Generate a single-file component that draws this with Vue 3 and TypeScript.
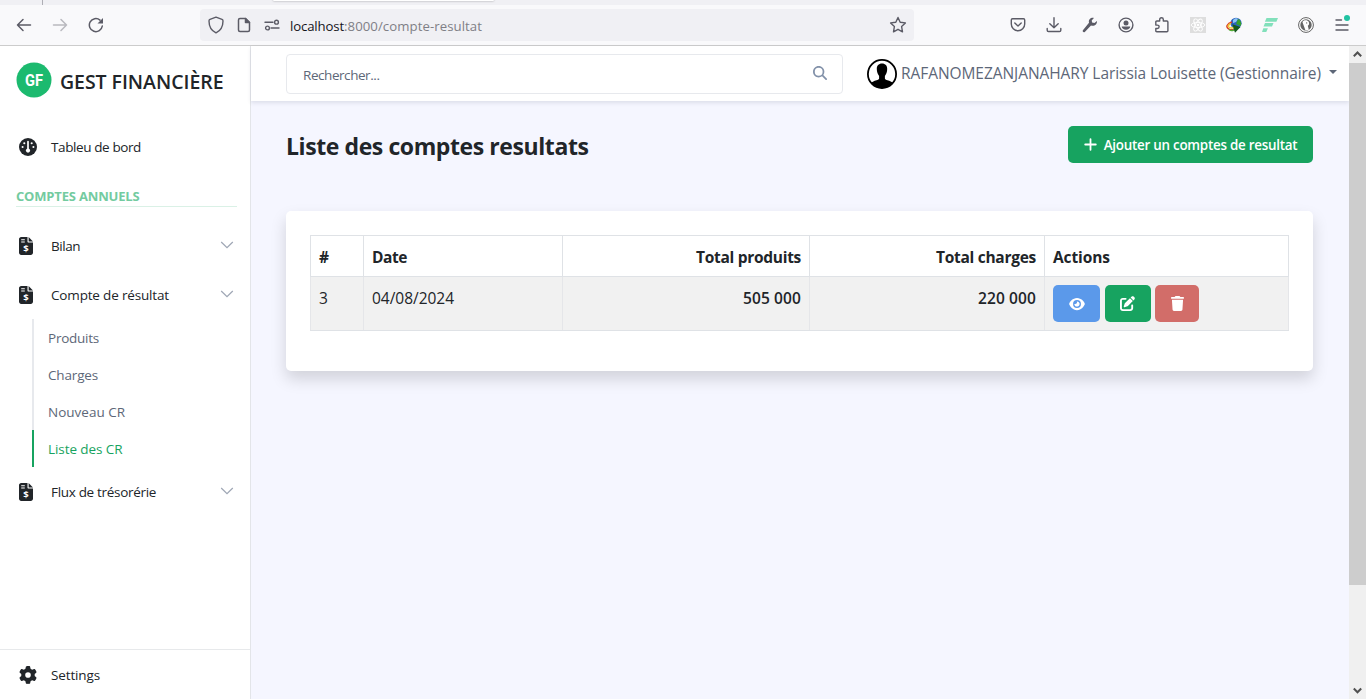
<script setup lang="ts">
import type { Directive } from 'vue'

interface Column { label: string; width: number; textWidth: number; end?: boolean }

const columns: Column[] = [
  { label: '#', width: 53, textWidth: 9 },
  { label: 'Date', width: 199, textWidth: 35 },
  { label: 'Total produits', width: 247, textWidth: 105, end: true },
  { label: 'Total charges', width: 235, textWidth: 100, end: true },
  { label: 'Actions', width: 244, textWidth: 57 },
]

const groups = [
  { label: 'Bilan', width: 29 },
  { label: 'Compte de résultat', width: 118, open: true },
  { label: 'Flux de trésorérie', width: 105 },
]

const subItems = [
  { label: 'Produits', width: 51 },
  { label: 'Charges', width: 50 },
  { label: 'Nouveau CR', width: 77 },
  { label: 'Liste des CR', width: 74.5, active: true },
]

// Tracks a label so that it fills the given width in pixels.
const vFit: Directive<HTMLElement, number> = {
  mounted(el, { value }) {
    const count = (el.textContent ?? '').length
    const natural = el.getBoundingClientRect().width
    if (count > 0 && natural > 0) el.style.letterSpacing = `${(value - natural) / count}px`
  },
}
</script>

<template>
  <div class="window">
    <div class="tabs"><span class="tab-sep"></span><span class="tab-active"></span></div>
    <div class="toolbar">
      <div class="nav-buttons">
        <span class="cell"><svg width="16" height="16" viewBox="0 0 16 16" class="ln w15"><path d="M14.500 8H1.500M7 2.500 1.500 8 7 13.500" /></svg></span>
        <span class="cell faded"><svg width="16" height="16" viewBox="0 0 16 16" class="ln w15"><path d="M1.500 8h13M9 2.500 14.500 8 9 13.500" /></svg></span>
        <span class="cell"><svg width="16" height="16" viewBox="0 0 16 16" class="ln w15"><path d="M14.300 9A6.500 6.500 0 1 1 12 3.100" /><path d="M15 1v5.500H9.500z" fill="#5b5b66" stroke="none" /></svg></span>
      </div>
      <div class="urlbar">
        <svg width="16" height="18" viewBox="0 0 16 18" class="ln w14 shield"><path d="M8 1.200 14 3.400c.7.300 1 .8 1 1.500 0 5.200-2 9.500-7 12-5-2.500-7-6.800-7-12 0-.7.300-1.200 1-1.500z" /></svg>
        <svg width="14" height="16" viewBox="0 0 14 16" class="ln w15 page"><path d="M3 1.500h5.500L12.500 5.500V13c0 .9-.6 1.500-1.500 1.500H3c-.9 0-1.500-.6-1.500-1.500V3c0-.9.600-1.500 1.500-1.500z" /><path d="M8.500 1.500v4h4z" fill="#5b5b66" /></svg>
        <svg width="16" height="12" viewBox="0 0 16 12" class="ln w14 perms"><path d="M1 3.300h8M7 9h8" /><circle cx="12.500" cy="3.200" r="1.900" /><circle cx="3.500" cy="9" r="1.900" /></svg>
        <span class="url"><span v-fit="54" class="fit host">localhost</span><span v-fit="138" class="fit">:8000/compte-resultat</span></span>
        <svg width="18" height="18" viewBox="0 0 18 18" class="ln w14 star"><path d="m9 1.500 2.200 4.700 5.200.7-3.800 3.600.9 5.300L9 13.300l-4.500 2.500.9-5.300L1.600 6.900l5.200-.7z" /></svg>
      </div>
      <div class="ext">
        <span class="cell"><svg width="16" height="16" viewBox="0 0 16 16" class="ln w14"><path d="M2.500 1.700h11c.7 0 1.200.5 1.200 1.200v4.200a6.700 6.700 0 0 1-13.400 0V2.900c0-.7.500-1.200 1.200-1.200z" /><path d="m4.800 6 3.200 3 3.200-3" /></svg></span>
        <span class="cell"><svg width="16" height="16" viewBox="0 0 16 16" class="ln w14"><path d="M8 .7v10M3.800 6.700 8 10.800l4.200-4.100M1.200 11.500v1.700c0 .8.500 1.300 1.300 1.300h11c.8 0 1.300-.5 1.300-1.300v-1.700" /></svg></span>
        <span class="cell"><svg width="16" height="16" viewBox="0 0 16 16"><path fill="#5b5b66" d="M15 3.900 12.400 6 10.100 5.500 9.700 3.400 11.900.9C8.900.3 6.200 2.500 7 5.700L.9 13.300c-.9 1.200.8 2.700 1.900 1.700L9 8.400c3.300 1.200 6.300-1.300 6-4.500z" /></svg></span>
        <span class="cell"><svg width="16" height="16" viewBox="0 0 16 16"><circle cx="8" cy="8" r="6.900" fill="none" stroke="#5b5b66" stroke-width="1.400" /><circle cx="8" cy="5.900" r="2.500" fill="#5b5b66" /><path fill="#5b5b66" d="M3.700 9.500h8.600c0 1.900-2 3.200-4.300 3.200s-4.300-1.300-4.300-3.200z" /></svg></span>
        <span class="cell"><svg width="16" height="16" viewBox="0 0 16 16" class="ln w14"><path d="M1.800 6.300V5c0-.6.400-1 1-1h2.900V2.500a1.800 1.800 0 0 1 3.600 0V4h3.600c.6 0 1 .4 1 1v8.800c0 .6-.4 1-1 1H2.800c-.6 0-1-.4-1-1v-2.300h1.600a1.700 1.700 0 0 0 0-3.400H1.800z" /></svg></span>
        <span class="cell"><svg width="16" height="16" viewBox="0 0 16 16"><path fill="#dedede" d="M0 0h16v16H0z" /><g fill="none" stroke="#fff" stroke-width=".9"><ellipse cx="8" cy="8" rx="6.800" ry="2.600" /><ellipse cx="8" cy="8" rx="6.800" ry="2.600" transform="rotate(60 8 8)" /><ellipse cx="8" cy="8" rx="6.800" ry="2.600" transform="rotate(120 8 8)" /></g><circle cx="8" cy="8" r="1.300" fill="#fff" /></svg></span>
        <span class="cell"><svg width="16" height="16" viewBox="0 0 16 16"><circle cx="10" cy="6.300" r="5.600" fill="#2b62bd" /><path fill="#8fc4f4" d="M7 3c2-2 4-2 5-1l-2 3-3 1z" /><path fill="#35a02c" d="M12 2c3 1 4 5 2.500 7L10 7z" /><path d="M6 5C1 6.500-.5 10 2.500 11.800S9 13 10 10" fill="none" stroke="#d83b23" stroke-width="1.500" /><path d="M5 6.600c-3 1.200-3.500 3-1.800 3.800s4 .8 5.300-.8" fill="none" stroke="#f1c832" stroke-width="1.600" /><path d="M3 12.500c2 1.600 5 1.500 7-1" fill="none" stroke="#52ac35" stroke-width="1.400" /><path fill="#145a1c" d="M6.300 7.200 14.500 10 9 15.700z" /></svg></span>
        <span class="cell"><svg width="16" height="16" viewBox="0 0 16 16" fill="#82e0bb"><path d="M4.500 1H16l-1.600 3.700H2.900zM3 6.100h8.500L10 9.600H1.500zM1.300 11.300h4.600L4.300 15H0z" /></svg></span>
        <span class="cell"><svg width="16" height="16" viewBox="0 0 16 16"><circle cx="8" cy="8" r="7.400" fill="#fff" stroke="#626262" /><circle cx="8" cy="8" r="5.700" fill="#666" /><path fill="#fff" d="M4.500 5.200C5 2.800 9.800 2.600 10.800 5c.6 1.600.4 3-1 3.800l1 4-3.300.6z" /><circle cx="8.700" cy="5.900" r=".6" fill="#555" /></svg></span>
        <span class="cell menu"><svg width="16" height="16" viewBox="0 0 16 16" class="ln w14"><path d="M2 3h5.500M2 8h12M2 13h12" /></svg><span class="dot"></span></span>
      </div>
    </div>

    <div class="page-body">
      <aside class="sidebar">
        <div class="brand">
          <svg class="logo" width="36" height="36" viewBox="0 0 36 36"><circle cx="18" cy="18" r="17.500" fill="#1cba6f" /><text x="18" y="23.700" text-anchor="middle" textLength="18" lengthAdjust="spacingAndGlyphs">GF</text></svg>
          <span v-fit="163.500" class="fit brand-name">GEST FINANCIÈRE</span>
        </div>

        <nav class="nav">
          <a class="item">
            <span class="icon"><svg width="18" height="18" viewBox="0 0 18 18"><circle cx="9" cy="9" r="9" fill="#212529" /><path d="M9 3.700v7.800" stroke="#fff" stroke-width="1.700" stroke-linecap="round" /><circle cx="9" cy="12.600" r="2.100" fill="#fff" /><g fill="#fff"><circle cx="5.300" cy="5.200" r="1.050" /><circle cx="12.700" cy="5.200" r="1.050" /><circle cx="3.600" cy="9" r="1.050" /><circle cx="14.400" cy="9" r="1.050" /></g></svg></span>
            <span v-fit="90" class="fit">Tableu de bord</span>
          </a>
          <div class="section"><span v-fit="123.500" class="fit">COMPTES ANNUELS</span></div>
          <template v-for="group in groups" :key="group.label">
            <a class="item">
              <span class="icon"><svg width="14" height="18" viewBox="0 0 14 18"><path fill="#212529" d="M2.200 0h6.300v4.600c0 .6.400 1 1 1h4.500v10.200c0 1.200-1 2.200-2.200 2.200H2.200C1 18 0 17 0 15.800V2.200C0 1 1 0 2.200 0z" /><path fill="#212529" d="M9.600 0 14 4.500H9.600z" /><path d="M2.200 2.700h3.600M2.200 5h3.600" stroke="#fff" stroke-width="1.050" /><text class="dollar" x="7" y="15.300" text-anchor="middle">$</text></svg></span>
              <span v-fit="group.width" class="fit">{{ group.label }}</span>
              <svg class="chevron" width="14" height="8" viewBox="0 0 14 8"><path d="m1.200 1 5.800 5.700L12.800 1" fill="none" stroke="#9fa7b5" stroke-width="1.250" /></svg>
            </a>
            <ul v-if="group.open" class="sub">
              <li v-for="s in subItems" :key="s.label" :class="{ active: s.active }"><span v-fit="s.width" class="fit">{{ s.label }}</span></li>
            </ul>
          </template>
        </nav>

        <a class="item settings">
          <span class="icon"><svg width="18" height="18" viewBox="0 0 512 512"><path fill="#212529" d="M495.900 166.600c3.200 8.700 .5 18.400-6.400 24.600l-43.300 39.400c1.100 8.300 1.700 16.800 1.700 25.400s-.6 17.100-1.700 25.400l43.300 39.400c6.900 6.200 9.600 15.900 6.400 24.600c-4.400 11.900-9.700 23.300-15.800 34.300l-4.700 8.100c-6.600 11-14 21.400-22.100 31.200c-5.900 7.200-15.700 9.600-24.500 6.800l-55.700-17.700c-13.400 10.300-28.200 18.900-44 25.400l-12.500 57.100c-2 9.100-9 16.300-18.200 17.800c-13.800 2.300-28 3.500-42.500 3.500s-28.700-1.200-42.500-3.500c-9.200-1.500-16.200-8.700-18.200-17.800l-12.500-57.100c-15.800-6.500-30.600-15.100-44-25.400L83.100 425.900c-8.800 2.800-18.600 .3-24.500-6.800c-8.100-9.800-15.500-20.200-22.100-31.200l-4.700-8.100c-6.100-11-11.400-22.400-15.800-34.300c-3.200-8.700-.5-18.400 6.400-24.600l43.300-39.400C64.600 273.100 64 264.600 64 256s.6-17.100 1.700-25.400L22.400 191.200c-6.900-6.200-9.600-15.900-6.400-24.600c4.400-11.900 9.700-23.300 15.800-34.300l4.700-8.100c6.600-11 14-21.400 22.100-31.200c5.900-7.200 15.700-9.600 24.500-6.800l55.700 17.700c13.400-10.300 28.200-18.900 44-25.400l12.500-57.100c2-9.100 9-16.300 18.200-17.800C227.300 1.200 241.500 0 256 0s28.700 1.200 42.500 3.500c9.200 1.500 16.200 8.700 18.200 17.800l12.500 57.100c15.800 6.500 30.600 15.100 44 25.400l55.700-17.700c8.800-2.800 18.600-.3 24.500 6.800c8.100 9.800 15.500 20.200 22.100 31.200l4.700 8.100c6.100 11 11.400 22.400 15.800 34.300zM256 336a80 80 0 1 0 0-160 80 80 0 1 0 0 160z" /></svg></span>
          <span v-fit="49" class="fit">Settings</span>
        </a>
      </aside>

      <div class="main">
        <header class="topbar">
          <div class="search">
            <span v-fit="76.500" class="fit">Rechercher...</span>
            <svg width="14" height="14" viewBox="0 0 512 512"><path fill="#8291a9" d="M416 208c0 45.900-14.900 88.300-40 122.700L502.600 457.400c12.500 12.500 12.500 32.800 0 45.300s-32.800 12.500-45.300 0L330.700 376c-34.400 25.200-76.800 40-122.700 40C93.100 416 0 322.900 0 208S93.100 0 208 0S416 93.100 416 208zM208 352a144 144 0 1 0 0-288 144 144 0 1 0 0 288z" /></svg>
          </div>
          <div class="user">
            <svg width="30" height="30" viewBox="0 0 30 30"><circle cx="15" cy="15" r="14.100" fill="#fff" stroke="#000" stroke-width="1.800" /><path d="M15 4.600c3.400 0 5.300 2.300 5.200 5.500 0 2.800-1 5.300-2.300 6.800v2.700c0 1.300 2.800 1.700 5.300 2.700 1.300.5 2 1 2.500 1.700A14.200 14.200 0 0 1 15 29.200 14.200 14.200 0 0 1 4.300 24c.5-.7 1.200-1.200 2.500-1.700 2.500-1 5.300-1.400 5.300-2.700v-2.700c-1.300-1.500-2.300-4-2.300-6.800-.1-3.200 1.800-5.500 5.200-5.500z" /></svg>
            <span v-fit="420" class="fit user-name">RAFANOMEZANJANAHARY Larissia Louisette (Gestionnaire)</span>
            <span class="caret"></span>
          </div>
        </header>

        <section class="content">
          <div class="title-row">
            <h1><span v-fit="302.500" class="fit">Liste des comptes resultats</span></h1>
            <button class="btn add"><svg width="13" height="13" viewBox="0 0 13 13"><path d="M6.500 1.200v10.600M1.200 6.500h10.600" stroke="#fff" stroke-width="1.800" stroke-linecap="round" /></svg><span v-fit="193.500" class="fit">Ajouter un comptes de resultat</span></button>
          </div>
          <div class="card">
            <table>
              <colgroup><col v-for="c in columns" :key="c.label" :style="{ width: c.width + 'px' }" /></colgroup>
              <thead>
                <tr><th v-for="c in columns" :key="c.label" :class="{ end: c.end }"><span v-fit="c.textWidth" class="fit">{{ c.label }}</span></th></tr>
              </thead>
              <tbody>
                <tr>
                  <td><span v-fit="9" class="fit">3</span></td>
                  <td><span v-fit="82" class="fit">04/08/2024</span></td>
                  <td class="end num"><span v-fit="58" class="fit">505 000</span></td>
                  <td class="end num"><span v-fit="58" class="fit">220 000</span></td>
                  <td class="tools">
                    <div class="actions">
                      <button class="btn view"><svg width="16" height="14" viewBox="0 0 576 512"><path fill="#fff" d="M288 32c-80.800 0-145.500 36.800-192.600 80.600C48.600 156 17.300 208 2.500 243.700c-3.300 7.900-3.300 16.700 0 24.600C17.300 304 48.600 356 95.400 399.400C142.500 443.200 207.200 480 288 480s145.500-36.800 192.600-80.600c46.800-43.500 78.100-95.400 93-131.100c3.300-7.900 3.300-16.700 0-24.600c-14.900-35.700-46.200-87.700-93-131.100C433.500 68.800 368.800 32 288 32zM144 256a144 144 0 1 1 288 0 144 144 0 1 1 -288 0zm144-64c0 35.300-28.700 64-64 64c-7.100 0-13.900-1.200-20.300-3.300c-5.500-1.800-11.900 1.600-11.700 7.400c.3 6.900 1.300 13.800 3.200 20.700c13.700 51.200 66.400 81.600 117.600 67.900s81.600-66.400 67.900-117.600c-11.100-41.500-47.800-69.400-88.600-71.100c-5.800-.2-9.200 6.100-7.400 11.700c2.100 6.400 3.300 13.200 3.300 20.300z" /></svg></button>
                      <button class="btn edit"><svg width="15" height="15" viewBox="0 0 512 512"><path fill="#fff" d="M471.600 21.700c-21.900-21.900-57.300-21.900-79.200 0L362.300 51.700l97.900 97.900 30.100-30.100c21.900-21.900 21.900-57.300 0-79.200L471.600 21.700zm-299.200 220c-6.100 6.100-10.800 13.600-13.500 21.900l-29.600 88.800c-2.900 8.600-.6 18.100 5.800 24.600s15.900 8.700 24.600 5.800l88.800-29.600c8.200-2.700 15.700-7.400 21.900-13.500L437.700 172.300 339.700 74.300 172.400 241.700zM96 64C43 64 0 107 0 160V416c0 53 43 96 96 96H352c53 0 96-43 96-96V320c0-17.700-14.300-32-32-32s-32 14.300-32 32v96c0 17.700-14.300 32-32 32H96c-17.700 0-32-14.300-32-32V160c0-17.700 14.300-32 32-32h96c17.700 0 32-14.300 32-32s-14.300-32-32-32H96z" /></svg></button>
                      <button class="btn remove"><svg width="13" height="15" viewBox="0 0 448 512"><path fill="#fff" d="M135.200 17.700L128 32H32C14.300 32 0 46.300 0 64S14.300 96 32 96H416c17.700 0 32-14.300 32-32s-14.300-32-32-32H320l-7.200-14.300C307.400 6.800 296.300 0 284.200 0H163.800c-12.100 0-23.200 6.800-28.600 17.700zM416 128H32L53.200 467c1.600 25.300 22.600 45 47.900 45H346.900c25.300 0 46.300-19.700 47.900-45L416 128z" /></svg></button>
                    </div>
                  </td>
                </tr>
              </tbody>
            </table>
          </div>
        </section>
      </div>

      <div class="scrollbar">
        <svg width="17" height="17" viewBox="0 0 17 17"><path d="m4.800 10.300 3.700-3.800 3.700 3.800" /></svg>
        <span class="thumb"></span>
        <svg width="17" height="17" viewBox="0 0 17 17"><path d="m4.800 6.500 3.700 3.800 3.700-3.800" /></svg>
      </div>
    </div>
  </div>
</template>

<style>
html, body { margin: 0; overflow: hidden; }
</style>

<style scoped>
* { box-sizing: border-box; }
.window { width: 1366px; height: 699px; display: flex; flex-direction: column; overflow: hidden; font-family: "Open Sans", "Noto Sans", sans-serif; font-size: 13.500px; color: #212529; background: #f5f6ff; }
.fit { display: inline-block; white-space: pre; vertical-align: top; }

.tabs { height: 5px; flex: none; background: #f0f0f4; display: flex; }
.tab-sep { width: 1px; margin-left: 42px; background: #aeaeb5; }
.tab-active { width: 221px; height: 1px; margin-left: 230px; background: #fff; border-radius: 0 0 4px 4px; box-shadow: 0 0 2px rgba(0, 0, 0, .5); }
.toolbar { height: 41px; flex: none; display: flex; background: #f9f9fb; border-bottom: 1px solid #ccc; }
.nav-buttons { display: flex; width: 200px; padding-left: 6px; }
.cell { width: 36px; height: 40px; display: flex; align-items: center; justify-content: center; }
.faded { opacity: .4; }
.ln { fill: none; stroke: #5b5b66; stroke-linecap: round; stroke-linejoin: round; }
.w14 { stroke-width: 1.400; }
.w15 { stroke-width: 1.500; }
.urlbar { width: 714px; height: 32px; margin-top: 4px; padding: 0 7px 0 8px; display: flex; align-items: center; background: #f0f0f4; border-radius: 4px; }
.page { margin-left: 13px; }
.perms { margin-left: 13px; }
.url { margin-left: 10px; padding-top: 1px; color: #7f7f86; font-size: 13.200px; }
.host { color: #15141a; }
.star { margin-left: auto; }
.ext { display: flex; margin-left: 86px; }
.menu { position: relative; }
.dot { position: absolute; right: 10px; top: 10px; width: 6px; height: 6px; border-radius: 50%; background: #20c3a2; }

.page-body { flex: 1; min-height: 0; display: flex; }
.sidebar { width: 251px; flex: none; display: flex; flex-direction: column; background: #fff; border-right: 1px solid #e3e5e9; }
.brand { height: 76px; padding: 16px 0 0 16px; display: flex; align-items: flex-start; }
.logo text { font: 700 16px Roboto, sans-serif; fill: #fff; }
.brand-name { margin: 6px 0 0 8px; font-size: 19.500px; line-height: 27px; font-weight: 600; }
.nav { flex: 1; }
.item { display: flex; align-items: center; height: 49px; padding: 0 16px 0 19px; }
.icon { width: 32px; display: flex; }
.chevron { margin-left: auto; margin-top: -2px; }
.section { height: 36px; margin: 0 13px 14px 16px; display: flex; align-items: flex-end; padding-bottom: 1px; font-weight: 700; font-size: 13px; line-height: 18px; color: #73cba0; border-bottom: 1px solid #daf1e6; }
.dollar { font: 700 9.500px "Open Sans", sans-serif; fill: #fff; }
.sub { list-style: none; margin: 0 0 0 32px; padding: 0; color: #5d6778; }
.sub li { height: 37px; display: flex; align-items: center; padding-left: 14px; border-left: 2px solid #e7e9ed; }
.sub .active { color: #17a360; border-left-color: #17a360; }
.settings { height: 50px; border-top: 1px solid #e7e9eb; }

.main { flex: 1; min-width: 0; }
.topbar { height: 55px; display: flex; align-items: flex-start; background: #fff; box-shadow: 0 2px 4px rgba(50, 55, 80, .12); padding: 8px 0 0 35px; }
.search { width: 557px; height: 40px; border: 1px solid #e7e9ed; border-radius: 4px; display: flex; align-items: center; justify-content: space-between; padding: 2px 15px 0 16px; color: #5d6778; }
.search svg { margin-top: -5px; }
.user { display: flex; align-items: center; margin: 5px 0 0 24px; color: #5d6778; }
.user-name { margin: -2px 0 0 4px; font-size: 15.500px; line-height: 24px; }
.caret { margin: -4px 0 0 8px; border: 4.500px solid transparent; border-top-color: #5d6778; border-bottom: 0; }

.content { padding: 25px 36px 0 35px; }
.title-row { display: flex; justify-content: space-between; align-items: flex-start; height: 85px; }
h1 { margin: 2px 0 0; font-size: 23px; font-weight: 700; line-height: 36px; }
.btn { height: 37px; border: 0; border-radius: 5px; display: flex; align-items: center; justify-content: center; padding: 0; font-family: inherit; color: #fff; }
.add { width: 245px; background: #17a360; font-size: 13.400px; font-weight: 600; }
.add .fit { margin-left: 7px; }
.card { height: 160px; padding: 24px; background: #fff; border-radius: 5px; box-shadow: 0 8px 16px rgba(0, 0, 0, .15); }
table { width: 978px; table-layout: fixed; border-collapse: collapse; font-size: 15.500px; line-height: 24px; }
th, td { border: 1px solid #dfe2e6; padding: 8px; text-align: left; vertical-align: top; }
th { height: 41px; padding-top: 9px; padding-bottom: 7px; font-weight: 700; }
td { height: 54px; padding-top: 9px; background: #f1f1f1; }
td.tools { padding-top: 8px; }
tbody td { border-left-color: #e5e6e9; border-right-color: #e5e6e9; }
.end { text-align: right; }
.num { font-weight: 600; }
.actions { display: flex; gap: 4.500px; }
.view { width: 47px; background: #5b99ea; }
.edit { width: 46px; background: #17a360; }
.remove { width: 44px; background: #d26d69; }

.scrollbar { width: 17px; flex: none; display: flex; flex-direction: column; justify-content: space-between; background: #f0f0f0; }
.scrollbar path { fill: none; stroke: #505050; stroke-width: 2; }
.thumb { height: 522px; margin-bottom: auto; background: #cdcdcd; }
</style>
